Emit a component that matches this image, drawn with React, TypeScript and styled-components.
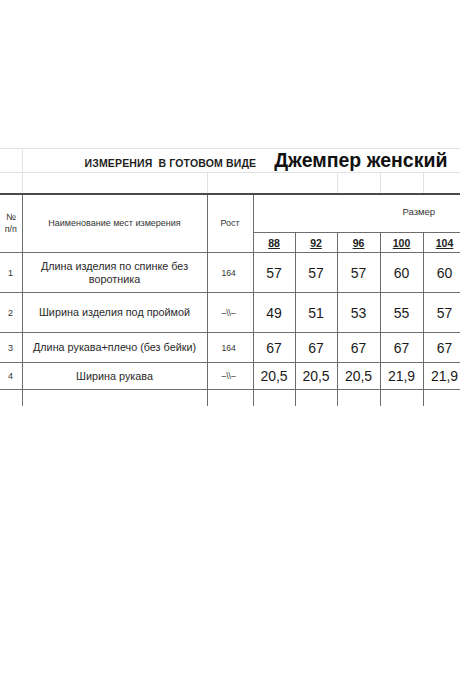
import styled, { createGlobalStyle } from "styled-components";

const GlobalStyle = createGlobalStyle`
    html, body {
        margin: 0;
        background: #fff;
    }
    body {
        font-family: "Liberation Sans", Arial, sans-serif;
    }
`;

const Page = styled.div`
    width: 460px;
    height: 690px;
    padding-top: 148px;
    box-sizing: border-box;
    overflow: hidden;
    background: #fff;
`;

const Sheet = styled.table`
    border-collapse: collapse;
    table-layout: fixed;
    width: 466px;
    color: #222;
`;

const Row = styled.tr<{ $h: number }>`
    height: ${(p) => p.$h}px;
`;

const Cell = styled.td<{ $light?: boolean; $edge?: boolean; $open?: boolean }>`
    padding: 0;
    text-align: center;
    vertical-align: middle;
    border: 1px solid ${(p) => (p.$light ? "#e2e2e2" : "#6e6e6e")};
    border-left: ${(p) => (p.$edge ? "none" : undefined)};
    border-bottom: ${(p) => (p.$open ? "none" : undefined)};
    overflow: hidden;
`;

const TitleCell = styled(Cell)`
    text-align: left;
    padding-left: 62px;
    white-space: pre;
`;

const Caption = styled.span`
    font-size: 10.5px;
    font-weight: bold;
    color: #1e1e1e;
    letter-spacing: 0.15px;
`;

const Product = styled.span`
    font-size: 19.5px;
    font-weight: bold;
    color: #111;
    margin-left: 18px;
`;

const HeadCell = styled(Cell)`
    font-size: 9px;
    color: #333;
    line-height: 12px;
    border-top: 2px solid #4a4a4a;
`;

const SizeTitle = styled(HeadCell)`
    text-align: left;
    padding-left: 149px;
    padding-bottom: 2px;
    font-size: 9.5px;
`;

const SizeCell = styled(Cell)`
    font-size: 10.5px;
    font-weight: bold;
    text-decoration: underline;
    color: #222;
`;

const NumCell = styled(Cell)`
    font-size: 9px;
    color: #333;
    text-align: left;
    padding-left: 8px;
`;

const NameCell = styled(Cell)`
    font-size: 10.8px;
    line-height: 13px;
    color: #2a2a2a;
    padding: 0 6px;
`;

const HeightCell = styled(Cell)`
    font-size: 8.5px;
    color: #333;
    text-align: left;
    padding-left: 14px;
`;

const ValueCell = styled(Cell)`
    font-size: 14px;
    color: #1a1a1a;
`;

const widths = [22, 185, 46, 42, 42, 43, 43, 43];
const sizes = ["88", "92", "96", "100", "104"];

const rows = [
    { n: "1", name: "Длина изделия по спинке без воротника", h: "164", v: ["57", "57", "57", "60", "60"], height: 40 },
    { n: "2", name: "Ширина изделия под проймой", h: "–\\\\–", v: ["49", "51", "53", "55", "57"], height: 40 },
    { n: "3", name: "Длина рукава+плечо (без бейки)", h: "164", v: ["67", "67", "67", "67", "67"], height: 30 },
    { n: "4", name: "Ширина рукава", h: "–\\\\–", v: ["20,5", "20,5", "20,5", "21,9", "21,9"], height: 27 },
];

export default function App() {
    return (
        <Page>
            <GlobalStyle />
            <Sheet>
                <colgroup>
                    {widths.map((w, i) => (
                        <col key={i} style={{ width: w }} />
                    ))}
                </colgroup>
                <tbody>
                    <Row $h={24}>
                        <Cell $light $edge />
                        <TitleCell $light colSpan={7}>
                            <Caption>ИЗМЕРЕНИЯ  В ГОТОВОМ ВИДЕ</Caption>
                            <Product>Джемпер женский</Product>
                        </TitleCell>
                    </Row>
                    <Row $h={21}>
                        <Cell $light $edge />
                        <Cell $light />
                        <Cell $light colSpan={3} />
                        <Cell $light />
                        <Cell $light />
                        <Cell $light />
                    </Row>
                    <Row $h={39}>
                        <HeadCell $edge rowSpan={2}>
                            №
                            <br />
                            п/п
                        </HeadCell>
                        <HeadCell rowSpan={2}>Наименование мест измерения</HeadCell>
                        <HeadCell rowSpan={2}>Рост</HeadCell>
                        <SizeTitle colSpan={5}>Размер</SizeTitle>
                    </Row>
                    <Row $h={20}>
                        {sizes.map((s) => (
                            <SizeCell key={s}>{s}</SizeCell>
                        ))}
                    </Row>
                    {rows.map((r) => (
                        <Row $h={r.height} key={r.n}>
                            <NumCell $edge>{r.n}</NumCell>
                            <NameCell>{r.name}</NameCell>
                            <HeightCell>{r.h}</HeightCell>
                            {r.v.map((v, i) => (
                                <ValueCell key={i}>{v}</ValueCell>
                            ))}
                        </Row>
                    ))}
                    <Row $h={16}>
                        <Cell $edge $open />
                        <Cell $open />
                        <Cell $open />
                        {sizes.map((s) => (
                            <Cell $open key={s} />
                        ))}
                    </Row>
                </tbody>
            </Sheet>
        </Page>
    );
}
